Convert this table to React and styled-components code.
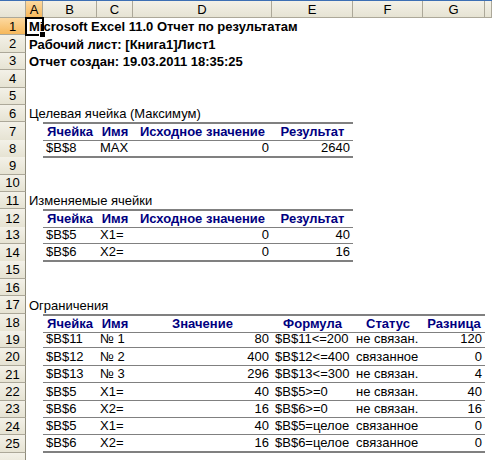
import React from "react";
import styled, { createGlobalStyle, css } from "styled-components";

const COLUMNS = "26px 17px 54px 36px 139px 81px 70px 62px 1fr";
const LETTERS = ["A", "B", "C", "D", "E", "F", "G", "H"];

const GlobalStyle = createGlobalStyle`
  html, body {
    margin: 0;
    padding: 0;
    background: #fff;
  }
  body {
    font-family: "Liberation Sans", Arial, sans-serif;
    font-size: 13px;
    color: #000;
    overflow: hidden;
  }
`;

const Sheet = styled.div`
  width: 492px;
  height: 460px;
  overflow: hidden;
  border-top: 1px solid #3c6fb4;
  box-sizing: border-box;
`;

const HeaderRow = styled.div`
  display: grid;
  grid-template-columns: ${COLUMNS};
  height: 17px;
`;

const Row = styled.div`
  display: grid;
  grid-template-columns: ${COLUMNS};
  height: 17.4px;
`;

const headBg = css`
  background: linear-gradient(#f3f1e8, #e6e3d3);
`;
const activeBg = css`
  background: linear-gradient(#fcd9a0, #f6b85c);
`;

const HeadCell = styled.div`
  ${(p) => (p.$active ? activeBg : headBg)}
  box-sizing: border-box;
  border-right: 1px solid #aca899;
  border-bottom: 1px solid #aca899;
  display: flex;
  align-items: center;
  justify-content: center;
  font-size: 13px;
  line-height: 15px;
  overflow: hidden;
`;

const RowNum = styled(HeadCell)`
  border-right-color: #8f8c7c;
`;

const lineFor = (kind) =>
  kind === "thick" ? "2px solid #808080" : kind === "thin" ? "1px solid #808080" : "none";

const Cell = styled.div`
  position: relative;
  box-sizing: border-box;
  display: flex;
  align-items: flex-end;
  justify-content: ${(p) =>
    p.$align === "right" ? "flex-end" : p.$align === "center" ? "center" : "flex-start"};
  padding: 0 3px 1px 3px;
  white-space: nowrap;
  line-height: 15px;
  font-weight: ${(p) => (p.$bold ? "bold" : "normal")};
  color: ${(p) => (p.$head ? "#000080" : "#000")};
  border-top: ${(p) => lineFor(p.$top)};
  border-bottom: ${(p) => lineFor(p.$bottom)};
  z-index: ${(p) => (p.$front ? 1 : 0)};
`;

const Selection = styled.div`
  position: absolute;
  left: -1px;
  top: -1px;
  right: -1px;
  bottom: -1px;
  border: 2px solid #000;
  pointer-events: none;
`;

const FillHandle = styled.div`
  position: absolute;
  right: -4px;
  bottom: -4px;
  width: 5px;
  height: 5px;
  background: #000;
  border: 1px solid #fff;
`;

const head1 = ["Ячейка", "Имя", "Исходное значение", "Результат"];
const head3 = ["Ячейка", "Имя", "Значение", "Формула", "Статус", "Разница"];
const align1 = ["left", "left", "right", "right"];
const align3 = ["left", "left", "right", "left", "left", "right"];

const rows = [
  { title: "Microsoft Excel 11.0 Отчет по результатам", bold: true },
  { title: "Рабочий лист: [Книга1]Лист1", bold: true },
  { title: "Отчет создан: 19.03.2011 18:35:25", bold: true },
  {},
  {},
  { title: "Целевая ячейка (Максимум)" },
  { head: head1, top: "thick", bottom: "thin" },
  { data: ["$B$8", "MAX", "0", "2640"], align: align1, bottom: "thick" },
  {},
  {},
  { title: "Изменяемые ячейки" },
  { head: head1, top: "thick", bottom: "thin" },
  { data: ["$B$5", "X1=", "0", "40"], align: align1, bottom: "thin" },
  { data: ["$B$6", "X2=", "0", "16"], align: align1, bottom: "thick" },
  {},
  {},
  { title: "Ограничения" },
  { head: head3, top: "thick", bottom: "thin" },
  { data: ["$B$11", "№ 1", "80", "$B$11<=200", "не связан.", "120"], align: align3, bottom: "thin" },
  { data: ["$B$12", "№ 2", "400", "$B$12<=400", "связанное", "0"], align: align3, bottom: "thin" },
  { data: ["$B$13", "№ 3", "296", "$B$13<=300", "не связан.", "4"], align: align3, bottom: "thin" },
  { data: ["$B$5", "X1=", "40", "$B$5>=0", "не связан.", "40"], align: align3, bottom: "thin" },
  { data: ["$B$6", "X2=", "16", "$B$6>=0", "не связан.", "16"], align: align3, bottom: "thin" },
  { data: ["$B$5", "X1=", "40", "$B$5=целое", "связанное", "0"], align: align3, bottom: "thin" },
  { data: ["$B$6", "X2=", "16", "$B$6=целое", "связанное", "0"], align: align3, bottom: "thick" },
];

function SheetRow({ n, row }) {
  const values = row.head || row.data || [];
  const cells = [];
  for (let i = 1; i < LETTERS.length; i++) {
    const k = i - 1;
    const inTable = k < values.length;
    cells.push(
      <Cell
        key={i}
        $head={!!row.head}
        $bold={!!row.head}
        $align={row.head ? "center" : row.align ? row.align[k] : "left"}
        $top={inTable ? row.top : undefined}
        $bottom={inTable ? row.bottom : undefined}
      >
        {inTable ? values[k] : null}
      </Cell>
    );
  }

  return (
    <Row>
      <RowNum $active={n === 1}>{n}</RowNum>
      <Cell $bold={row.bold} $front={n === 1}>
        {row.title}
        {n === 1 && (
          <Selection>
            <FillHandle />
          </Selection>
        )}
      </Cell>
      {cells}
    </Row>
  );
}

export default function App() {
  return (
    <>
      <GlobalStyle />
      <Sheet>
        <HeaderRow>
          <HeadCell />
          {LETTERS.map((l) => (
            <HeadCell key={l} $active={l === "A"}>
              {l === "H" ? null : l}
            </HeadCell>
          ))}
        </HeaderRow>
        {rows.map((row, i) => (
          <SheetRow key={i} n={i + 1} row={row} />
        ))}
        <Row>
          <RowNum />
        </Row>
      </Sheet>
    </>
  );
}
